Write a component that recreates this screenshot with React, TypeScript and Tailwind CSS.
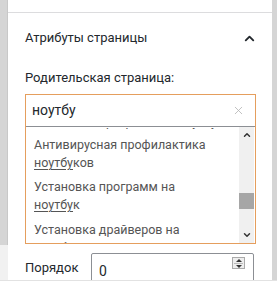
import { ChevronUp, ChevronDown, X } from "lucide-react";

const results = [
  { match: "ноутбу", after: "ков", lead: "Антивирусная профилактика" },
  { match: "ноутбу", after: "к", lead: "Установка программ на" },
];

export default function App() {
  return (
    <div className="w-[277px] h-[304px] bg-white overflow-hidden text-[#23282d]" style={{ fontFamily: 'Roboto, "Noto Sans", sans-serif' }}>
      <div className="flex h-[281px] border-b border-[#e2e2e2]">
        <div className="w-[8px] flex flex-col">
          <div className="h-[245px] bg-[#d5d5d5] border-r border-[#c8c8c8]" />
          <div className="flex-1 bg-[#f1f1f1]" />
        </div>
        <div className="flex-1 pt-[12px] overflow-hidden">
          <div className="border-t border-[#dcdcde] h-full pl-[17px] pr-[16px]">
            <div className="flex items-center justify-between h-[50px]">
              <span className="text-[13px]">Атрибуты страницы</span>
              <ChevronUp className="w-[15px] h-[15px] mr-[-1px]" strokeWidth={3} />
            </div>
            <div className="text-[13px] h-[30px] leading-[30px]">Родительская страница:</div>
            <div className="border border-[#e59e5d] mt-[1px]">
              <div className="h-[32px] flex items-center justify-between pl-[6px] pr-[10px] border-b border-[#8c8f94]">
                <span className="text-[14px]">ноутбу</span>
                <X className="w-[13px] h-[13px] text-[#b4b4b4]" strokeWidth={1.5} />
              </div>
              <div className="h-[116px] flex overflow-hidden">
                <div className="flex-1 pl-[8px] text-[12.5px] text-[#555] leading-[18px]">
                  <div className="h-[4px] overflow-hidden">
                    <div className="h-[3px] overflow-hidden mt-[1px]">
                      <div className="-mt-[15px]">Установка программ на ноутбу</div>
                    </div>
                  </div>
                  {results.map((r, i) => (
                    <div key={i} className="pt-[5px] pb-[1px]">
                      <div>{r.lead}</div>
                      <div>
                        <span className="underline underline-offset-2">{r.match}</span>
                        {r.after}
                      </div>
                    </div>
                  ))}
                  <div className="pt-[6px]">
                    <div>Установка драйверов на</div>
                    <div>
                      <span className="underline underline-offset-2">ноутбу</span>к
                    </div>
                  </div>
                </div>
                <div className="w-[15px] bg-[#f0f0f0] flex flex-col items-center py-[3px] mr-[1px]">
                  <ChevronUp className="w-[10px] h-[10px] text-[#333]" strokeWidth={3.5} />
                  <div className="w-[15px] h-[16px] bg-[#a6a6a6] mt-[53px]" />
                  <div className="flex-1" />
                  <ChevronDown className="w-[10px] h-[10px] text-[#333]" strokeWidth={3.5} />
                </div>
              </div>
            </div>
            <div className="flex items-start mt-[9px]">
              <span className="text-[13px] w-[66px] pt-[5px]">Порядок</span>
              <div className="flex-1 h-[32px] border border-[#8c8f94] rounded-[2px] flex items-start justify-between pl-[7px] pr-[8px] mr-[2px]">
                <span className="text-[14px] pt-[7px]">0</span>
                <div className="w-[13px] h-[12px] border border-[#aaa] bg-[#eee] flex flex-col items-center justify-center mt-[3px]">
                  <span className="block w-0 h-0 border-l-[3px] border-r-[3px] border-b-[3px] border-l-transparent border-r-transparent border-b-[#333]" />
                  <span className="block w-[9px] h-px bg-[#bbb] my-[1px]" />
                  <span className="block w-0 h-0 border-l-[3px] border-r-[3px] border-t-[3px] border-l-transparent border-r-transparent border-t-[#333]" />
                </div>
              </div>
            </div>
          </div>
        </div>
        <div className="w-[5px] bg-[#d5d5d5]" />
      </div>
    </div>
  );
}
